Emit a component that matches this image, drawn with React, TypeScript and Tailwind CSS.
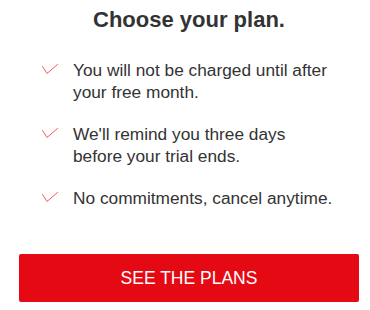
import React from 'react';

const perks: string[][] = [
  ['You will not be charged until after', 'your free month.'],
  ["We'll remind you three days", 'before your trial ends.'],
  ['No commitments, cancel anytime.'],
];

const Check = () => (
  <svg width="16" height="11" viewBox="0 0 16 11" fill="none" className="shrink-0 mt-[5px]">
    <path d="M0.5 2.5 L5 9.5 L15.5 0.5" stroke="#e50914" strokeOpacity="0.75" strokeWidth="0.9" strokeLinecap="round" strokeLinejoin="round" />
  </svg>
);

export default function App() {
  return (
    <div className="w-[370px] h-[310px] bg-white pl-[19px] pr-[11px] pt-[5px] text-[#333]" style={{ fontFamily: '"Liberation Sans", Arial, sans-serif' }}>
      <h1 className="text-center text-[22px] leading-[29px] font-bold text-[#333]">Choose your plan.</h1>
      <ul className="mt-[25px] pl-[23px] flex flex-col gap-[20px]">
        {perks.map((lines, i) => (
          <li key={i} className="flex items-start gap-[15px]">
            <Check />
            <p className="text-[17.3px] leading-[22px]">
              {lines.map((l, j) => (
                <React.Fragment key={j}>
                  {j > 0 && <br />}
                  {l}
                </React.Fragment>
              ))}
            </p>
          </li>
        ))}
      </ul>
      <button className="mt-[45px] w-[340px] h-[48px] rounded-[2px] bg-[#e50914] text-white text-[17.5px] uppercase">
        See the plans
      </button>
    </div>
  );
}
